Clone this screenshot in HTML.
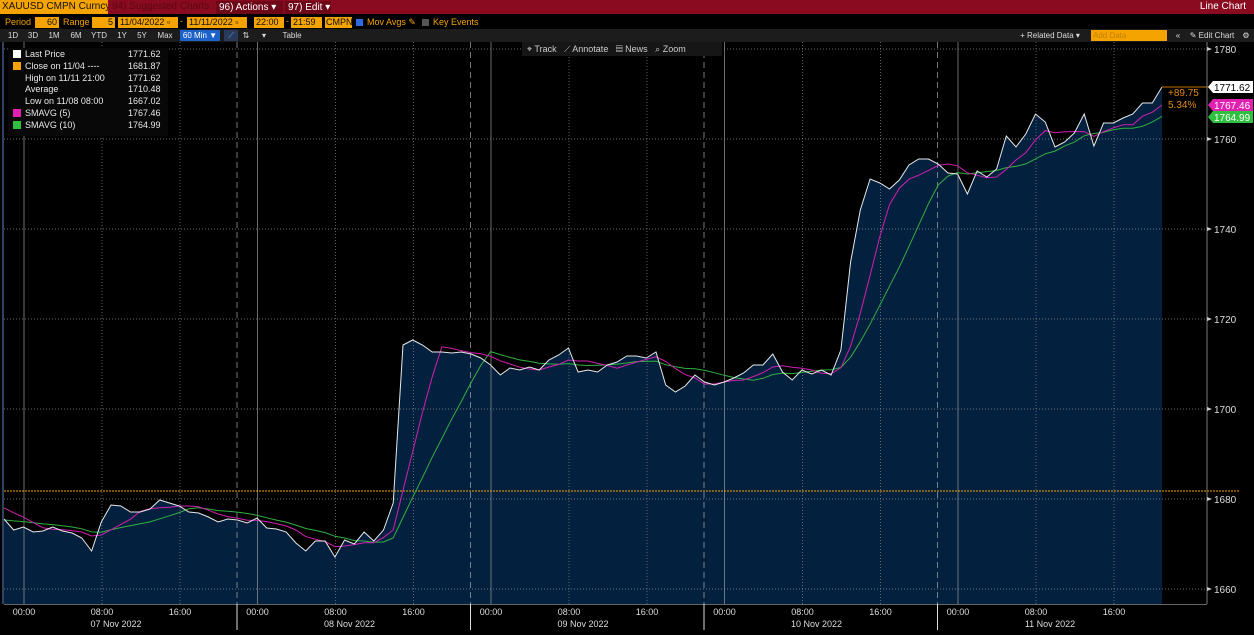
<!DOCTYPE html>
<html><head><meta charset="utf-8"><style>
*{margin:0;padding:0;box-sizing:border-box}
body{width:1254px;height:635px;background:#000;overflow:hidden;position:relative;font-family:"Liberation Sans",sans-serif;font-size:9px;color:#ddd}
.a{position:absolute;white-space:nowrap;overflow:hidden}
#top{left:0;top:0;width:1254px;height:14px;background:#8a0b1f}
.ob{background:#f5a300;color:#111}
#r3{left:0;top:29px;width:1254px;height:13px;background:#1c1c1c}
.btn{position:absolute;top:30px;height:11px;line-height:11px;font-size:8px;color:#ddd;text-align:center}
</style></head><body>
<div class="a" id="top"></div>
<div class="a ob" style="left:0;top:0;width:108px;height:14px;line-height:14px;font-size:10px;padding-left:2px">XAUUSD CMPN Curncy</div>
<div class="a" style="left:112px;top:0;width:102px;height:14px;line-height:14px;font-size:10px;color:#5a0814">94) Suggested Charts</div>
<div class="a" style="left:216px;top:1px;width:67px;height:13px;line-height:13px;font-size:10px;background:#6e0818;color:#fff;padding-left:3px">96) Actions ▾</div>
<div class="a" style="left:285px;top:1px;width:46px;height:13px;line-height:13px;font-size:10px;background:#6e0818;color:#fff;padding-left:3px">97) Edit ▾</div>
<div class="a" style="right:8px;top:0;height:14px;line-height:14px;font-size:10px;color:#fff">Line Chart</div>

<div class="a" style="left:5px;top:16px;font-size:9px;color:#f5a300;line-height:13px">Period</div>
<div class="a ob" style="left:35px;top:17px;width:24px;height:11px;text-align:right;line-height:11px;padding-right:2px">60</div>
<div class="a" style="left:63px;top:16px;font-size:9px;color:#f5a300;line-height:13px">Range</div>
<div class="a ob" style="left:92px;top:17px;width:23px;height:11px;text-align:right;line-height:11px;padding-right:2px">5</div>
<div class="a ob" style="left:118px;top:17px;width:60px;height:11px;line-height:11px;padding-left:2px">11/04/2022 ▫</div>
<div class="a" style="left:180px;top:16px;color:#f5a300">-</div>
<div class="a ob" style="left:187px;top:17px;width:60px;height:11px;line-height:11px;padding-left:2px">11/11/2022 ▫</div>
<div class="a ob" style="left:254px;top:17px;width:30px;height:11px;line-height:11px;padding-left:2px">22:00</div>
<div class="a" style="left:286px;top:16px;color:#f5a300">-</div>
<div class="a ob" style="left:291px;top:17px;width:31px;height:11px;line-height:11px;padding-left:2px">21:59</div>
<div class="a ob" style="left:325px;top:17px;width:27px;height:11px;line-height:11px;padding-left:1px">CMPN</div>
<div class="a" style="left:356px;top:19px;width:7px;height:7px;background:#2a6be0"></div>
<div class="a" style="left:367px;top:16px;color:#f5a300;line-height:13px">Mov Avgs ✎</div>
<div class="a" style="left:422px;top:19px;width:7px;height:7px;background:#555"></div>
<div class="a" style="left:433px;top:16px;color:#f5a300;line-height:13px">Key Events</div>

<div class="a" id="r3"></div>
<div class="btn" style="left:6px;width:14px">1D</div>
<div class="btn" style="left:26px;width:14px">3D</div>
<div class="btn" style="left:47px;width:14px">1M</div>
<div class="btn" style="left:68px;width:16px">6M</div>
<div class="btn" style="left:89px;width:20px">YTD</div>
<div class="btn" style="left:115px;width:14px">1Y</div>
<div class="btn" style="left:135px;width:14px">5Y</div>
<div class="btn" style="left:155px;width:20px">Max</div>
<div class="btn" style="left:180px;width:40px;background:#1d62c8;color:#fff">60 Min ▼</div>
<div class="btn" style="left:224px;width:14px;background:#2a3a5a;color:#6af">⟋</div>
<div class="btn" style="left:240px;width:12px">⇅</div>
<div class="btn" style="left:258px;width:12px">▾</div>
<div class="btn" style="left:278px;width:28px">Table</div>
<div class="btn" style="left:1014px;width:72px">+ Related Data ▾</div>
<div class="a" style="left:1091px;top:30px;width:76px;height:11px;background:#f5a300;color:#c88000;font-size:8px;line-height:11px;padding-left:2px">Add Data</div>
<div class="btn" style="left:1172px;width:12px">«</div>
<div class="btn" style="left:1184px;width:56px">✎ Edit Chart</div>
<div class="btn" style="left:1240px;width:12px">⚙</div>

<svg class="a" style="left:0;top:42px" width="1254" height="593" viewBox="0 42 1254 593" id="ch"></svg>

<div class="a" style="left:8px;top:48px;width:160px;height:88px;background:#080808"></div>
<div class="a" style="left:13px;top:49px;line-height:11.8px;font-size:9px;color:#e8e8e8">
<div><span style="display:inline-block;width:8px;height:8px;background:#fff;margin-right:4px;vertical-align:-1px"></span>Last Price</div>
<div><span style="display:inline-block;width:8px;height:8px;background:#f5a300;margin-right:4px;vertical-align:-1px"></span>Close on 11/04 ----</div>
<div style="padding-left:12px">High on 11/11 21:00</div>
<div style="padding-left:12px">Average</div>
<div style="padding-left:12px">Low on 11/08 08:00</div>
<div><span style="display:inline-block;width:8px;height:8px;background:#e020b0;margin-right:4px;vertical-align:-1px"></span>SMAVG (5)</div>
<div><span style="display:inline-block;width:8px;height:8px;background:#30c040;margin-right:4px;vertical-align:-1px"></span>SMAVG (10)</div>
</div>
<div class="a" style="left:128px;top:49px;line-height:11.8px;font-size:9px;color:#e8e8e8;text-align:right">1771.62<br>1681.87<br>1771.62<br>1710.48<br>1667.02<br>1767.46<br>1764.99</div>

<div class="a" style="left:522px;top:42px;width:200px;height:14px;background:#161616;font-size:9px;line-height:14px;color:#ccc">&nbsp;&nbsp;⌖ Track &nbsp;&nbsp;⟋ Annotate &nbsp;&nbsp;▤ News &nbsp;&nbsp;⌕ Zoom</div>

<script>
var Y=[519,530,527,532,531,527,531,533,538,551,522,505,506,512,512,509,500,503,506,512,513,517,522,519,520,523,518,528,529,532,543,551,541,541,557,540,544,532,541,530,503,345,340,345,352,352,353,352,354,358,365,375,368,370,367,370,360,355,348,372,370,372,365,362,356,356,358,352,385,392,386,375,382,385,382,378,373,365,365,354,372,380,370,374,370,375,350,262,210,179,183,189,180,165,159,159,164,173,174,194,171,177,169,136,147,134,114,122,147,142,133,114,146,123,123,118,114,103,103,87];
var n=Y.length,X=[];for(var i=0;i<n;i++)X.push(4+i*1158/(n-1));
function sma(k,pre){var o=[];for(var i=0;i<n;i++){var s=0;for(var j=0;j<k;j++){var idx=i-j;s+=idx>=0?Y[idx]:pre;}o.push(s/k);}return o;}
var M=sma(5,505),G=sma(10,520);
function pl(a){return a.map(function(v,i){return X[i].toFixed(1)+','+v.toFixed(1)}).join(' ');}
var s='';
s+='<path d="M4,604 L'+pl(Y)+' L1162,604 Z" fill="#04203f"/>';
[49,139,229,319,409,499,589].forEach(function(y){s+='<line x1="4" y1="'+y+'" x2="1206" y2="'+y+'" stroke="#888" stroke-width="1" stroke-dasharray="1,2" opacity=".8"/>';});
for(var d=0;d<5;d++){var x0=24+d*233.5;s+='<line x1="'+x0+'" y1="42" x2="'+x0+'" y2="604" stroke="#999" stroke-width="1" opacity=".7"/>';
[78,156].forEach(function(o){s+='<line x1="'+(x0+o)+'" y1="42" x2="'+(x0+o)+'" y2="604" stroke="#888" stroke-dasharray="1,2" opacity=".7"/>';});
if(d<4){var dx=x0+213;s+='<line x1="'+dx+'" y1="42" x2="'+dx+'" y2="604" stroke="#aaa" stroke-dasharray="6,4" opacity=".7"/>';}}
s+='<line x1="4" y1="491" x2="1240" y2="491" stroke="#f5a300" stroke-dasharray="2,1"/>';
s+='<polyline points="'+pl(G)+'" fill="none" stroke="#30b040" stroke-width="1"/>';
s+='<polyline points="'+pl(M)+'" fill="none" stroke="#d020b0" stroke-width="1"/>';
s+='<polyline points="'+pl(Y)+'" fill="none" stroke="#e8e8e8" stroke-width="1"/>';
s+='<line x1="1162" y1="87" x2="1212" y2="87" stroke="#c07000"/>';
s+='<line x1="1207" y1="42" x2="1207" y2="604" stroke="#777"/>';
s+='<line x1="3" y1="42" x2="3" y2="604" stroke="#3a5a80" stroke-width="1.5"/>';
s+='<text x="1168" y="96" fill="#e08a10" font-size="10" font-family="Liberation Sans">+89.75</text>';
s+='<text x="1168" y="108" fill="#e08a10" font-size="10" font-family="Liberation Sans">5.34%</text>';
[[1780,49],[1760,139],[1740,229],[1720,319],[1700,409],[1680,499],[1660,589]].forEach(function(p){s+='<path d="M1207,'+(p[1]-2)+' l5,2 l-5,2z" fill="#ccc"/><text x="1214" y="'+(p[1]+4)+'" fill="#ddd" font-size="10" font-family="Liberation Sans">'+p[0]+'</text>';});
function tag(y,bg,fg,t){s+='<path d="M1208,'+y+' l5,-6 h40 v12 h-40z" fill="'+bg+'"/><text x="1214" y="'+(y+4)+'" fill="'+fg+'" font-size="10" font-family="Liberation Sans">'+t+'</text>';}
tag(87,'#fff','#000','1771.62');tag(105,'#e020b0','#fff','1767.46');tag(117,'#30c040','#fff','1764.99');
s+='<line x1="4" y1="604.5" x2="1207" y2="604.5" stroke="#666"/>';
var days=['07 Nov 2022','08 Nov 2022','09 Nov 2022','10 Nov 2022','11 Nov 2022'];
for(var d=0;d<5;d++){var x0=24+d*233.5;['00:00','08:00','16:00'].forEach(function(t,k){s+='<text x="'+(x0+k*78)+'" y="615" fill="#ddd" font-size="9" text-anchor="middle" font-family="Liberation Sans">'+t+'</text>';});
s+='<text x="'+(x0+92)+'" y="627" fill="#ddd" font-size="9" text-anchor="middle" font-family="Liberation Sans">'+days[d]+'</text>';
if(d<4)s+='<line x1="'+(x0+213)+'" y1="604" x2="'+(x0+213)+'" y2="630" stroke="#ddd"/>';}
document.getElementById('ch').innerHTML=s;
</script>
</body></html>
